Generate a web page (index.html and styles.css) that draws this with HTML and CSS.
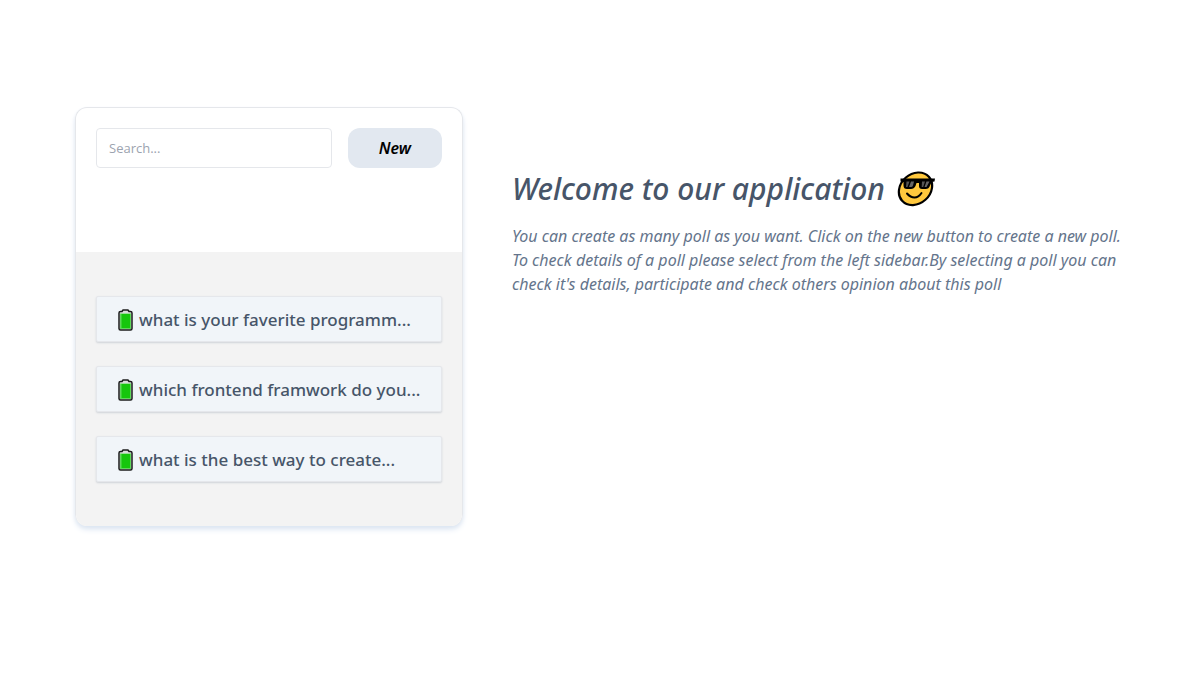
FILE: index.html
```html
<!DOCTYPE html>
<html lang="en">
<head>
<meta charset="utf-8">
<meta name="viewport" content="width=device-width, initial-scale=1">
<title>Polls</title>
<link rel="stylesheet" href="styles.css">
</head>
<body>
<svg class="sprite" aria-hidden="true">
  <symbol id="battery" viewBox="0 0 15 22">
    <path d="M5 1h5l1 1.500h1.500q1.500 0 1.500 1.500v15.500q0 1.500-1.500 1.500h-10Q1 21 1 19.500V4q0-1.500 1.500-1.500H4z" fill="#d9ddd9" stroke="#1c1c1c" stroke-width="1.500" stroke-linejoin="round"/>
    <path d="M2 4.500h11V20H2z" fill="#5fd95a"/>
    <path d="M3.500 5H12v14H3.500z" fill="#16c60c"/>
  </symbol>
</svg>
<main class="page">
  <aside class="sidebar">
    <form class="toolbar">
      <input class="search" type="search" placeholder="Search..." aria-label="Search polls">
      <button class="new-button" type="button">New</button>
    </form>
    <ul class="polls">
      <li><button class="poll" type="button"><svg class="battery" aria-hidden="true"><use href="#battery"/></svg><span>what is your faverite programm...</span></button></li>
      <li><button class="poll" type="button"><svg class="battery" aria-hidden="true"><use href="#battery"/></svg><span>which frontend framwork do you...</span></button></li>
      <li><button class="poll" type="button"><svg class="battery" aria-hidden="true"><use href="#battery"/></svg><span>what is the best way to create...</span></button></li>
    </ul>
  </aside>
  <section class="welcome">
    <h1 class="title">
      <span>Welcome to our application</span>
      <svg class="face" viewBox="0 0 38 36" role="img" aria-label="Smiling face with sunglasses">
        <ellipse cx="18.500" cy="17.800" rx="18" ry="14.800" transform="rotate(-42 18.500 17.800)" fill="#ffc83d" stroke="#000" stroke-width="2.200"/>
        <path d="M3.500 7.500H38l-.5 3-3 .5-1.500 3.500Q32 18 28.500 18H25q-3 0-3-3v-3h-2.500l-1 3Q17 18 14 18h-4q-3.500 0-3.500-3.500V11l-3-.5z" fill="#000"/>
        <path d="M12.500 10.500h-3l-.5 5.500h1.500zM28 10.500h-3l-.3 5.500h1.500z" fill="#555"/>
        <path d="M17 10.500h-3L12 16h2q1.500 0 2-1.500zM32.500 10.500h-3l-2 5.500h2z" fill="#666"/>
        <path d="M10 22.500q3.500 4 7.500 4 4 0 7-4.500" fill="none" stroke="#000" stroke-width="2" stroke-linecap="round"/>
      </svg>
    </h1>
    <p class="intro">You can create as many poll as you want. Click on the new button to create a new poll. To check details of a poll please select from the left sidebar.By selecting a poll you can check it's details, participate and check others opinion about this poll</p>
  </section>
</main>
</body>
</html>
```

FILE: styles.css
```css
* {
  box-sizing: border-box;
}

body {
  margin: 0;
  background: #fff;
  color: #475569;
  font-family: "Noto Sans", sans-serif;
}

.sprite {
  display: none;
}

.page {
  display: grid;
  grid-template-columns: minmax(0, 388fr) minmax(0, 621fr);
  column-gap: 49px;
  align-items: start;
  padding: 107px 69px 40px 75px;
}

.sidebar {
  overflow: hidden;
  border: 1px solid #e5e7eb;
  border-bottom: 0;
  border-radius: 12px;
  box-shadow: 0 4px 6px -1px #dbe5f2, 0 2px 4px -1px #e2e8f0;
}

.toolbar {
  display: flex;
  gap: 16px;
  padding: 20px 20px 84px;
}

.search {
  flex: 1;
  min-width: 0;
  height: 40px;
  padding: 0 12px;
  border: 1px solid #e5e7eb;
  border-radius: 4px;
  background: #fff;
  color: #475569;
  font: 13px/20px "Open Sans", "Noto Sans", sans-serif;
}

.search::placeholder {
  color: #9ca3af;
}

.new-button {
  height: 40px;
  padding: 0 31px;
  border: 0;
  border-radius: 12px;
  background: #e2e8f0;
  color: #000;
  font: italic 600 16px/24px "Noto Sans", sans-serif;
}

.polls {
  display: grid;
  gap: 24px;
  margin: 0;
  padding: 44px 20px;
  background: #f3f3f3;
  list-style: none;
}

.poll {
  display: flex;
  align-items: center;
  gap: 6px;
  width: 100%;
  height: 46px;
  padding: 2px 12px 0 21px;
  border: 1px solid #e5e7eb;
  border-radius: 2px;
  background: #f1f5f9;
  box-shadow: 0 1px 2px #cfd3d8;
  color: #475569;
  font: 500 17px/28px "Noto Sans", sans-serif;
  white-space: nowrap;
}

.battery {
  flex: none;
  width: 15px;
  height: 22px;
}

.welcome {
  padding-top: 60px;
}

.title {
  display: flex;
  align-items: center;
  gap: 12px;
  margin: 0 0 14px;
  font: italic 500 30px/43px "Noto Sans", sans-serif;
  white-space: nowrap;
}

.face {
  flex: none;
  width: 38px;
  height: 36px;
}

.intro {
  margin: 0;
  color: #64748b;
  font: italic 16px/24px "Noto Sans", sans-serif;
}
```
